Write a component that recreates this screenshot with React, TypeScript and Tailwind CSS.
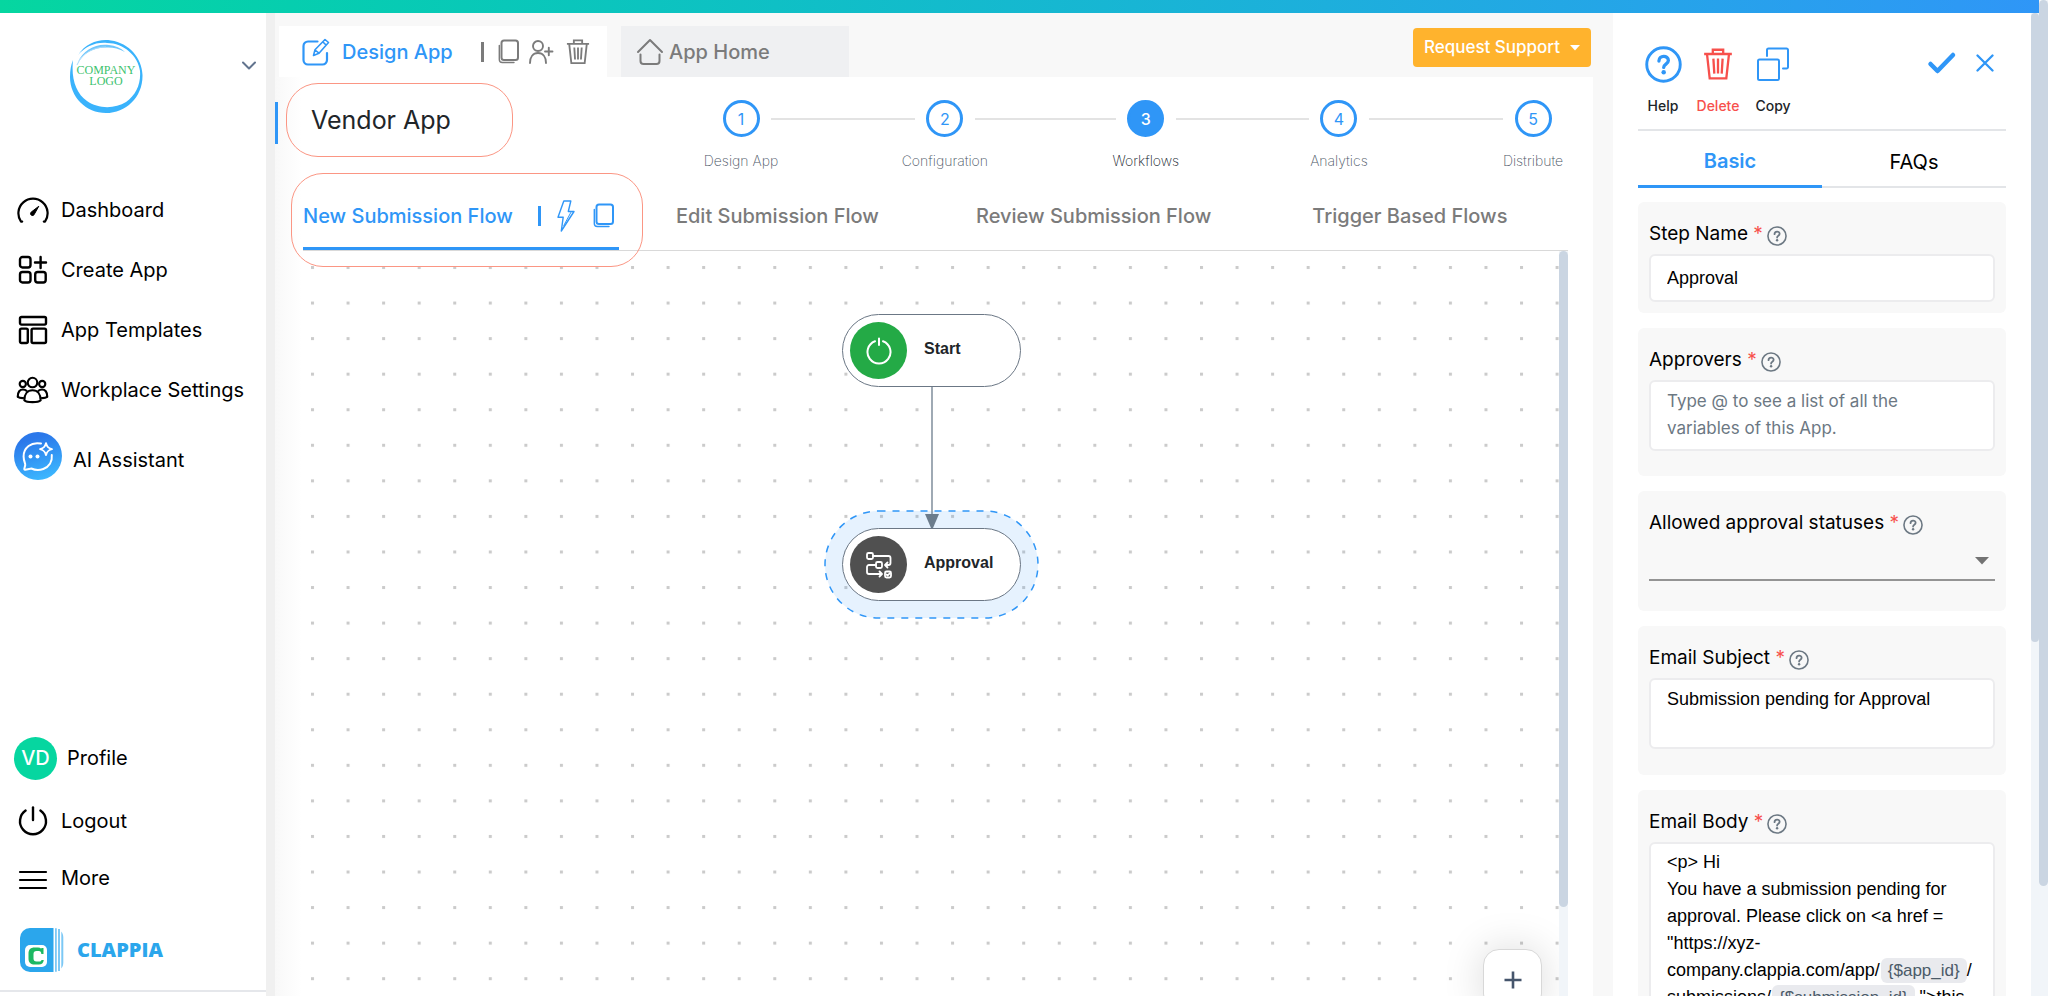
import React from 'react';

type IconProps = { className?: string };

const stroke = {
  fill: 'none',
  stroke: 'currentColor',
  strokeLinecap: 'round' as const,
  strokeLinejoin: 'round' as const,
};

function GaugeIcon() {
  return (
    <svg width="32" height="26" viewBox="0 0 32 26" {...stroke} strokeWidth="2.200">
      <path d="M5.200 24.600H4A14.600 14.600 0 1 1 28 24.600h-1.200" />
      <path d="M21.500 9.500 14.600 14.800a2 2 0 1 0 2.800 2.400Z" fill="currentColor" strokeWidth="1" />
    </svg>
  );
}

function CreateIcon() {
  return (
    <svg width="30" height="30" viewBox="0 0 30 30" {...stroke} strokeWidth="2.400">
      <rect x="2" y="2" width="10.500" height="10.500" rx="2.500" />
      <rect x="2" y="17" width="10.500" height="10.500" rx="2.500" />
      <rect x="17.200" y="17" width="10.500" height="10.500" rx="2.500" />
      <path d="M22.600 2v11M17 7.500h11" />
    </svg>
  );
}

function TemplatesIcon() {
  return (
    <svg width="30" height="30" viewBox="0 0 30 30" {...stroke} strokeWidth="2.400">
      <rect x="2" y="2" width="26" height="7.600" rx="1.500" />
      <rect x="2" y="13.600" width="7.800" height="14.400" rx="1.500" />
      <rect x="13.600" y="13.600" width="14.400" height="14.400" rx="1.500" />
    </svg>
  );
}

function PeopleIcon() {
  return (
    <svg width="34" height="28" viewBox="0 0 34 28" {...stroke} strokeWidth="2.200">
      <circle cx="17" cy="6.300" r="4.900" />
      <circle cx="7" cy="7.800" r="3.200" />
      <circle cx="27" cy="7.800" r="3.200" />
      <path d="M8.600 24.500c0-6 3-10.200 8.400-10.200s8.400 4.200 8.400 10.200c-2.600 2.600-14.200 2.600-16.800 0Z" />
      <path d="M7.400 22.300c-2 .1-4.200-.3-5.600-1.300 0-5.200 2.200-7.500 5.400-7.500 1.500 0 2.700.4 3.600 1.300M26.600 22.300c2 .1 4.200-.3 5.600-1.300 0-5.200-2.200-7.500-5.400-7.500-1.500 0-2.700.4-3.600 1.300" />
    </svg>
  );
}

function AssistantIcon() {
  return (
    <svg width="48" height="48" viewBox="0 0 48 48" fill="none">
      <defs>
        <linearGradient id="assistant" x1="0.3" y1="0" x2="0.6" y2="1">
          <stop offset="0.15" stopColor="#2b78ea" />
          <stop offset="1" stopColor="#3cb8ff" />
        </linearGradient>
      </defs>
      <circle cx="24" cy="24" r="24" fill="url(#assistant)" />
      <path d="M27 11.600C17 9.500 9.600 16 9.600 24.500c0 3.300.9 5.300 1.600 7.500.4 1.400-.9 4.200-.9 5 0 .7.5.9 1.200.8l5.800-1.300c3 1.400 8 2 12 .5C35 34.800 38.500 29.500 37.800 23" stroke="#fff" strokeWidth="2" strokeLinecap="round" />
      <path d="M32 11.200c1 3.700 2.100 4.800 5.900 5.900-3.800 1.100-4.900 2.200-5.900 5.900-1-3.700-2.100-4.800-5.900-5.900 3.800-1.100 4.900-2.200 5.900-5.900Z" stroke="#fff" strokeWidth="2" strokeLinejoin="round" />
      <circle cx="16.500" cy="24.500" r="2" fill="#fff" />
      <circle cx="23.500" cy="24.500" r="2" fill="#fff" />
    </svg>
  );
}

function PowerIcon({ className }: IconProps) {
  return (
    <svg className={className} viewBox="0 0 30 30" {...stroke}>
      <path d="M7.600 4.600a13 13 0 1 0 14.800 0" />
      <path d="M15 1.500v12.500" />
    </svg>
  );
}

function NodePowerIcon() {
  return (
    <svg width="26" height="28" viewBox="0 0 26 28" {...stroke} strokeWidth="2">
      <path d="M9 4.200a11.500 11.500 0 1 0 8 0M13 1.500V8" />
    </svg>
  );
}

function MenuIcon() {
  return (
    <svg width="30" height="22" viewBox="0 0 30 22" {...stroke} strokeWidth="2.200">
      <path d="M2 3h26M2 11h26M2 19h26" />
    </svg>
  );
}

function BrandIcon() {
  return (
    <svg width="44" height="44" viewBox="0 0 44 44">
      <path d="M10 0h23.500v44H10A10 10 0 0 1 0 34V10A10 10 0 0 1 10 0Z" fill="#2ba6ec" />
      <path d="M35 0.300h1.800v43.400H35Z" fill="#7cc8f5" />
      <path d="M38 1h2v42h-2ZM41.300 3.500c1.300 1.500 2 3.500 2 6v25c0 2.500-.7 4.500-2 6Z" fill="#7cc8f5" />
      <rect x="5" y="17" width="22" height="22" rx="5" fill="#fff" />
      <path d="M23.500 20v6h-2.200c0-2-.8-3-2.500-3h-2.300c-2 0-3 1-3 3v4.500c0 2 1 3 3 3h2.500c1.500 0 2.200-.5 2.500-1.500h2.300c-.5 3-2 4.500-5 4.500h-4c-4 0-6.300-2-6.300-6v-5c0-4 2.200-6 6-6h3.500c1.300 0 2.400.4 3.300 1.200v-.7Z" fill="#1db863" />
    </svg>
  );
}

function CompanyLogo() {
  return (
    <div className="grid h-[74px] w-[74px] place-items-center">
      <svg className="col-start-1 row-start-1 h-full w-full" viewBox="0 0 74 74" fill="none">
        <path d="M9 16C17 4 30-.5 42 1.500 60 4 73 19 73.500 36 74 58 57 74 37 74 17 74 1 58 1 38c0-7 1-12 3-17C2 40 7 54 18 62c11 8 28 8 39 1 10-7 15-18 14-31C69 17 55 4 38 4 26 3 16 8 9 16Z" fill="#3ab3fc" />
        <path d="M9 23C14 11 27 4 40 6c6 .8 12 3 16 7-7-4-13-5-20-4.500C25 9 15 13 9 23Z" fill="#6fc6fb" />
        <path d="M8 26C13 14 25 8 37 8" stroke="#a9dcfb" strokeWidth="1" />
      </svg>
      <div className="col-start-1 row-start-1 text-center font-['Liberation_Serif',serif] text-[12px] leading-[11px] text-[#3cc26e]">
        COMPANY
        <br />
        LOGO
      </div>
    </div>
  );
}

function EditIcon() {
  return (
    <svg width="28" height="28" viewBox="0 0 28 28" {...stroke} strokeWidth="2.200">
      <path d="M15.500 3.500H6a4.500 4.500 0 0 0-4.500 4.500v14A4.500 4.500 0 0 0 6 26.500h14.500a4.500 4.500 0 0 0 4.500-4.500v-7" />
      <path d="m11.500 17.500 1.500-5.700L23 1.500l3.500 3-9.500 10.800ZM21 4l3 3M13 12l4 3.200" strokeWidth="1.600" />
    </svg>
  );
}

function CopyIcon() {
  return (
    <svg width="22" height="26" viewBox="0 0 22 26" {...stroke}>
      <rect x="3.500" y="1.500" width="16.500" height="19.500" rx="2.500" strokeWidth="2" />
      <path d="M1.300 6.500v14a3 3 0 0 0 3 3H16" strokeWidth="1.400" />
    </svg>
  );
}

function UserPlusIcon() {
  return (
    <svg width="26" height="26" viewBox="0 0 26 26" {...stroke} strokeWidth="1.900">
      <circle cx="10" cy="7" r="5" />
      <path d="M2 24c0-6 3-10 8-10s8 4 8 10M17 12.500h7.500M20.800 8.800v7.500" />
    </svg>
  );
}

function TrashIcon({ className }: IconProps) {
  return (
    <svg className={className} viewBox="0 0 26 28" {...stroke} strokeLinecap="butt" strokeLinejoin="miter">
      <path d="M1 5.200h24M8.500 5V1.500h9V5M3.500 5.500 5.800 26.300h14.400L22.500 5.500M9 9.200l.8 13M13 9.200v13M17 9.200l-.8 13" />
    </svg>
  );
}

function HomeIcon() {
  return (
    <svg width="28" height="28" viewBox="0 0 28 28" {...stroke} strokeWidth="2">
      <path d="M2 14 14 2l12 12M4.500 16.500V23a3 3 0 0 0 3 3h13a3 3 0 0 0 3-3v-6.500" />
    </svg>
  );
}

function BoltIcon() {
  return (
    <svg width="18" height="32" viewBox="0 0 18 32" {...stroke} strokeWidth="1.400">
      <path d="M6.800 1h7l-2.500 10.500H17L4.300 31l1.900-13.800H1Z" />
      <path d="m13.800 12.500-7 13" strokeWidth="1" />
    </svg>
  );
}

function HelpCircle({ className }: IconProps) {
  return (
    <svg className={className} viewBox="0 0 38 38" {...stroke} strokeWidth="3">
      <circle cx="19" cy="19" r="17.200" />
      <path d="M14.300 15.500c0-6.500 9.700-6.300 9.700-.7 0 3.800-4.800 3.700-4.800 7.200" strokeWidth="3.400" />
      <circle cx="19.200" cy="27" r="2.300" fill="currentColor" stroke="none" />
    </svg>
  );
}

function DuplicateIcon() {
  return (
    <svg width="32" height="34" viewBox="0 0 32 34" {...stroke} strokeWidth="2">
      <rect x="1" y="12.500" width="21" height="20.500" rx="1.500" />
      <path d="M10 9V3a1.500 1.500 0 0 1 1.500-1.500H29.500A1.500 1.500 0 0 1 31 3v17a1.500 1.500 0 0 1-1.500 1.500H26" />
    </svg>
  );
}

function ApprovalIcon() {
  return (
    <svg width="28" height="28" viewBox="0 0 28 28" {...stroke} strokeWidth="1.800">
      <rect x="2" y="2" width="6" height="6" rx="1.500" />
      <rect x="11" y="11" width="6" height="6" rx="1.500" />
      <rect x="20" y="20.500" width="6" height="6" rx="1.500" />
      <path d="M8 5h15.500a2 2 0 0 1 2 2v5a2 2 0 0 1-2 2h-3M22.500 11.500 20 14l2.500 2.500M11 14H4a2 2 0 0 0-2 2v5a2 2 0 0 0 2 2h12.500M14.500 20.500 17 23l-2.500 2.500M21.500 23.500l1.200 1 2-2.200" />
    </svg>
  );
}

function Sidebar() {
  const links = [
    { label: 'Dashboard', icon: <GaugeIcon /> },
    { label: 'Create App', icon: <CreateIcon /> },
    { label: 'App Templates', icon: <TemplatesIcon /> },
    { label: 'Workplace Settings', icon: <PeopleIcon /> },
  ];

  return (
    <aside className="flex w-[266px] shrink-0 flex-col bg-white text-xl text-black">
      <div className="flex items-start justify-between pt-[26px] pr-[10px] pl-[69px]">
        <CompanyLogo />
        <button aria-label="Switch workplace" className="mt-[22px] text-slate-500">
          <svg width="14" height="9" viewBox="0 0 14 9" {...stroke} strokeWidth="2">
            <path d="m1 1.500 6 6 6-6" />
          </svg>
        </button>
      </div>
      <nav className="mt-[67px] flex flex-col">
        {links.map((link) => (
          <a key={link.label} href="#" className="flex h-[60px] items-center gap-3 pl-4">
            <span className="flex w-[33px] justify-center">{link.icon}</span>
            {link.label}
          </a>
        ))}
        <a href="#" className="flex h-[72px] items-center gap-[11px] pl-[14px]">
          <AssistantIcon />
          <span className="pt-2">AI Assistant</span>
        </a>
      </nav>
      <div className="mt-auto flex flex-col">
        <a href="#" className="flex h-[60px] items-center gap-[10px] pl-[14px]">
          <span className="flex h-[43px] w-[43px] items-center justify-center rounded-full bg-[#06d6a0] font-medium text-white">VD</span>
          Profile
        </a>
        <button className="flex h-[66px] items-center gap-3 pl-4 text-left">
          <span className="flex w-[33px] justify-center"><PowerIcon className="w-[30px] stroke-[2.4]" /></span>
          Logout
        </button>
        <button className="flex h-12 items-center gap-3 pl-4 text-left">
          <span className="flex w-[33px] justify-center pt-1"><MenuIcon /></span>
          More
        </button>
        <a href="#" className="mt-[26px] mb-[18px] flex items-center gap-[13px] pl-5 font-['Open_Sans','Inter',sans-serif] font-extrabold text-[#2ba6ec]">
          <BrandIcon />
          CLAPPIA
        </a>
        <div className="mb-1 border-t-2 border-gray-200" />
      </div>
    </aside>
  );
}

function AppTabs() {
  return (
    <header className="flex items-start pt-[13px] pl-1">
      <div className="flex h-[51px] w-[328px] items-center bg-white pl-[23px] text-[#7b7b7b]">
        <a href="#" className="flex items-center gap-3 text-xl font-medium text-[#2f96f7]">
          <EditIcon />
          Design App
        </a>
        <span className="ml-[28px] h-5 w-[3px] bg-[#7b7b7b]" />
        <button aria-label="Duplicate app" className="ml-[14px]"><CopyIcon /></button>
        <button aria-label="Add user" className="ml-[8px]"><UserPlusIcon /></button>
        <button aria-label="Delete app" className="ml-[12px]"><TrashIcon className="w-[24px] stroke-2" /></button>
      </div>
      <a href="#" className="ml-[14px] flex h-[51px] w-[228px] items-center gap-[5px] bg-[#eff0f2] pl-[15px] text-xl font-medium text-[#7b7b7b]">
        <HomeIcon />
        App Home
      </a>
      <button className="mt-[2px] mr-[22px] ml-auto flex h-[39px] items-center gap-[10px] rounded bg-[#ffb32d] px-[11px] text-[17px] font-medium text-white">
        Request Support
        <svg width="10" height="6" viewBox="0 0 10 6"><path d="M0 0h10L5 5.500Z" fill="currentColor" /></svg>
      </button>
    </header>
  );
}

const steps = ['Design App', 'Configuration', 'Workflows', 'Analytics', 'Distribute'];
const grow = [147, 144, 136, 137];

function Stepper() {
  return (
    <ol className="mt-[23px] mr-4 ml-auto flex w-[880px] items-start">
      {steps.map((step, i) => (
        <React.Fragment key={step}>
          <li className="flex w-[88px] flex-none flex-col items-center">
            <button
              className={`flex h-[37px] w-[37px] items-center justify-center rounded-full border-[3px] border-[#2f96f7] text-base ${
                i === 2 ? 'bg-[#2f96f7] font-medium text-white' : 'bg-white text-[#2f96f7]'
              }`}
            >
              {i + 1}
            </button>
            <span className={`mt-3 text-sm leading-6 font-extralight ${i === 2 ? 'text-gray-900' : 'text-gray-600'}`}>
              {step}
            </span>
          </li>
          {i < grow.length && <li aria-hidden className="-mx-[14px] mt-[18px] h-[2px] bg-[#e3e3e3]" style={{ flexGrow: grow[i] }} />}
        </React.Fragment>
      ))}
    </ol>
  );
}

function FlowTabs() {
  return (
    <div className="grid h-[77px] grid-cols-4 border-b border-[#d9d9d9] text-xl font-medium text-[#7b7b7b]">
      <div className="relative flex items-center border-b-3 border-[#2f96f7] pt-[10px] text-[#2f96f7]">
        <a href="#" className="whitespace-nowrap">New Submission Flow</a>
        <span className="ml-auto h-5 w-[3px] bg-[#2f96f7]" />
        <button aria-label="Run flow" className="ml-4"><BoltIcon /></button>
        <button aria-label="Copy flow" className="mr-1 ml-[18px]"><CopyIcon /></button>
        <div className="pointer-events-none absolute -top-px -right-6 -bottom-5 -left-3 z-10 rounded-[32px] border border-[#fb9684]" />
      </div>
      {['Edit Submission Flow', 'Review Submission Flow', 'Trigger Based Flows'].map((tab) => (
        <a key={tab} href="#" className="flex items-center justify-center pt-2">{tab}</a>
      ))}
    </div>
  );
}

function Canvas() {
  return (
    <div className="flex min-h-0 flex-1">
      <div className="relative min-w-0 flex-1 overflow-hidden">
        <svg className="absolute inset-0 h-full w-full">
          <defs>
            <pattern id="dots" x="8" y="15" width="35.56" height="35.56" patternUnits="userSpaceOnUse">
              <rect width="3" height="3" fill="#cbcbcb" />
            </pattern>
          </defs>
          <rect width="100%" height="100%" fill="url(#dots)" />
        </svg>

        <svg className="absolute top-[259px] left-[521px]" width="216" height="109" viewBox="0 0 216 109">
          <rect x="1" y="1" width="213" height="107" rx="53.500" fill="#2f96f7" fillOpacity="0.12" stroke="#2f96f7" strokeWidth="1.500" strokeDasharray="7 7" />
        </svg>
        <svg className="absolute top-[136px] left-[621px]" width="16" height="142" viewBox="0 0 16 142">
          <path d="M8 0v130" stroke="#6b7c8c" strokeWidth="1.300" />
          <path d="M1 127h14l-6 14H7Z" fill="#6b7c8c" />
        </svg>

        <button className="absolute top-[63px] left-[539px] flex h-[73px] w-[179px] items-center gap-[17px] rounded-full border border-[#6b7785] bg-white pl-[7px] font-['Liberation_Sans',Arial,sans-serif] text-base font-bold text-[#212529]">
          <span className="flex h-[57px] w-[57px] items-center justify-center rounded-full bg-[#24aa46] text-white">
            <NodePowerIcon />
          </span>
          <span className="pb-1">Start</span>
        </button>
        <button className="absolute top-[277px] left-[539px] flex h-[73px] w-[179px] items-center gap-[17px] rounded-full border border-[#6b7785] bg-white pl-[7px] font-['Liberation_Sans',Arial,sans-serif] text-base font-bold text-[#212529]">
          <span className="flex h-[57px] w-[57px] items-center justify-center rounded-full bg-[#505050] text-white">
            <ApprovalIcon />
          </span>
          <span className="pb-1">Approval</span>
        </button>

        <button aria-label="Zoom in" className="absolute right-[17px] -bottom-[14px] flex h-[61px] w-[59px] items-center justify-center rounded-2xl border border-[#d8d8d8] bg-white text-slate-600 shadow-[0_0_40px_rgba(0,0,0,0.15)]">
          <svg width="18" height="18" viewBox="0 0 18 18" stroke="currentColor" strokeWidth="2.600"><path d="M9 0.500v17M0.500 9h17" /></svg>
        </button>
      </div>
      <div aria-hidden className="flex w-[9px] flex-col bg-slate-100">
        <div className="h-[88%] rounded-full bg-slate-300" />
      </div>
    </div>
  );
}

function Designer() {
  return (
    <main className="flex min-w-0 flex-1 flex-col bg-[#f8f8f8]">
      <AppTabs />
      <div className="mr-5 flex min-h-0 flex-1 flex-col bg-linear-to-r from-[#f8f8f8] to-white to-2%">
        <div className="flex h-[97px] items-start">
          <div className="mt-[25px] h-[42px] w-[3px] bg-[#2f96f7]" />
          <h1 className="mt-1.5 ml-2 flex h-[74px] w-[227px] items-center rounded-[32px] border border-[#fb9684] pt-[2px] pl-6 text-[25px] text-[#212529]">
            Vendor App
          </h1>
          <Stepper />
        </div>
        <div className="flex min-h-0 flex-1 flex-col pr-[25px] pl-7">
          <FlowTabs />
          <Canvas />
        </div>
      </div>
    </main>
  );
}

function FieldCard({ label, id, className, children }: { label: string; id: string; className: string; children: React.ReactNode }) {
  return (
    <section className={`rounded-md bg-[#f8f8f8] px-[11px] pt-4 ${className}`}>
      <div className="mb-1 flex h-8 items-center text-[19px] text-black">
        <label htmlFor={id} id={`${id}-label`}>
          {label} <span className="text-[#f7504c]">*</span>
        </label>
        <button aria-label={`About ${label}`} className="mt-1 ml-1 text-[#6c7883]">
          <HelpCircle className="w-5" />
        </button>
      </div>
      {children}
    </section>
  );
}

const box = 'block w-full resize-none rounded-md border-2 border-[#ececee] bg-white pl-4 leading-[27px] text-black outline-none';
const boxText = "pr-4 font-['Liberation_Sans',Arial,sans-serif] text-lg";

function Chip({ children }: { children: React.ReactNode }) {
  return <span className="ml-px rounded-md bg-[#e9eaee] px-[7px] py-[3px] text-[17px] text-[#4b5a68]">{children}</span>;
}

function StepPanel() {
  return (
    <aside className="flex w-[418px] shrink-0 flex-col bg-white px-[25px]">
      <div className="flex h-[118px] items-start border-b-2 border-[#e3e5e8] pt-[32px] text-sm font-medium">
        <button className="flex w-[50px] flex-col items-center text-[#212529]">
          <span className="flex h-[38px] items-center text-[#2f96f7]"><HelpCircle className="w-[37px]" /></span>
          <span className="mt-[13px]">Help</span>
        </button>
        <button className="ml-[5px] flex w-[50px] flex-col items-center text-[#f7504c]">
          <span className="flex h-[38px] items-center"><TrashIcon className="w-[30px] stroke-2" /></span>
          <span className="mt-[13px]">Delete</span>
        </button>
        <button className="ml-[5px] flex w-[50px] flex-col items-center text-[#212529]">
          <span className="flex h-[38px] items-center text-[#2f96f7]"><DuplicateIcon /></span>
          <span className="mt-[13px]">Copy</span>
        </button>
        <div className="mt-[6px] mr-3 ml-auto flex items-center gap-[19px] text-[#2f96f7]">
          <button aria-label="Save">
            <svg width="30" height="24" viewBox="0 0 30 24" {...stroke} strokeWidth="4.500"><path d="m3.500 13 7 7L26 4" /></svg>
          </button>
          <button aria-label="Close">
            <svg width="18" height="18" viewBox="0 0 18 18" {...stroke} strokeWidth="2.300"><path d="m1.500 1.500 15 15M16.500 1.500l-15 15" /></svg>
          </button>
        </div>
      </div>

      <div className="grid h-[57px] shrink-0 grid-cols-2 text-xl">
        <button className="border-b-3 border-[#2f96f7] pt-1.5 font-semibold text-[#2f96f7]">Basic</button>
        <button className="border-b-2 border-[#e3e5e8] pt-1.5 text-black">FAQs</button>
      </div>

      <div className="mt-[14px] flex min-h-0 flex-1 flex-col gap-[15px] overflow-hidden *:shrink-0">
        <FieldCard label="Step Name" id="step-name" className="h-[111px]">
          <input id="step-name" defaultValue="Approval" className={`${box} ${boxText} h-12`} />
        </FieldCard>
        <FieldCard label="Approvers" id="approvers" className="h-[148px]">
          <textarea
            id="approvers"
            placeholder="Type @ to see a list of all the variables of this App."
            className={`${box} h-[71px] overflow-hidden py-[6px] pr-12 text-[17px] placeholder:text-[#6c7883]`}
          />
        </FieldCard>
        <FieldCard label="Allowed approval statuses" id="statuses" className="h-[120px]">
          <div className="relative border-b-2 border-[#949494]">
            <select id="statuses" className="block h-9 w-full appearance-none bg-transparent text-lg outline-none" />
            <svg className="pointer-events-none absolute top-[14px] right-[6px] text-[#737373]" width="14" height="8" viewBox="0 0 14 8">
              <path d="M0 0h14L7 7.500Z" fill="currentColor" />
            </svg>
          </div>
        </FieldCard>
        <FieldCard label="Email Subject" id="subject" className="h-[149px]">
          <textarea id="subject" defaultValue="Submission pending for Approval" className={`${box} ${boxText} h-[71px] overflow-hidden py-[6px]`} />
        </FieldCard>
        <FieldCard label="Email Body" id="email-body" className="h-[400px]">
          <div id="email-body" role="textbox" aria-labelledby="email-body-label" contentEditable suppressContentEditableWarning className={`${box} ${boxText} h-[340px] py-[5px]`}>
            &lt;p&gt; Hi
            <br />
            You have a submission pending for approval. Please click on &lt;a href = "https://xyz-
            <br />
            company.clappia.com/app/<Chip>{'{$app_id}'}</Chip>/
            <br />
            submissions/<Chip>{'{$submission_id}'}</Chip> "&gt;this
          </div>
        </FieldCard>
      </div>
    </aside>
  );
}

export default function App() {
  return (
    <div className="flex h-screen overflow-hidden bg-white font-['Inter',sans-serif]">
      <div className="flex min-w-0 flex-1 flex-col">
        <div className="h-[13px] shrink-0 bg-linear-to-r from-[#06d6a0] to-[#2f96f7]" />
        <div className="flex min-h-0 flex-1">
          <Sidebar />
          <div className="w-[9px] shrink-0 bg-[#f0f0f0]" />
          <Designer />
          <StepPanel />
          <div aria-hidden className="w-2 shrink-0 bg-slate-100">
            <div className="h-[64%] rounded-full bg-slate-300" />
          </div>
        </div>
      </div>
      <div aria-hidden className="w-[9px] shrink-0 bg-slate-100">
        <div className="h-[89%] rounded-full bg-slate-300" />
      </div>
    </div>
  );
}
